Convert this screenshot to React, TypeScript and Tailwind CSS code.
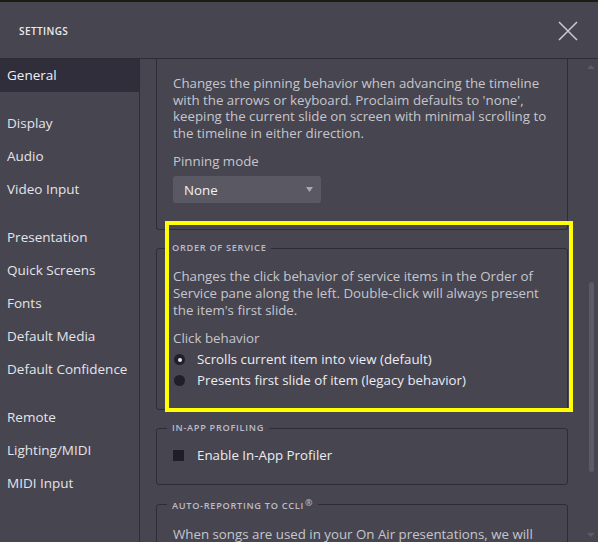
import React from 'react';

const navGroups: string[][] = [
  ['General'],
  ['Display', 'Audio', 'Video Input'],
  ['Presentation', 'Quick Screens', 'Fonts', 'Default Media', 'Default Confidence'],
  ['Remote', 'Lighting/MIDI', 'MIDI Input'],
];

const Legend: React.FC<{ children: React.ReactNode }> = ({ children }) => (
  <legend className="-ml-[6px] px-[5px] text-[9.2px] leading-[12px] font-semibold uppercase tracking-[0.7px] text-[#bdbcc5]">
    {children}
  </legend>
);

export default function App() {
  return (
    <div className="relative w-[598px] h-[542px] overflow-hidden bg-[#464550] font-['Open_Sans',sans-serif] text-[#e6e6ea] flex flex-col">
      <div className="h-[2px] bg-[#1c1c17] shrink-0" />

      {/* header */}
      <div className="h-[56px] shrink-0 flex items-center justify-between pl-[19px] pr-[20px] border-b border-[#2d2c38] box-content">
        <h1 className="mt-[2px] text-[10px] font-semibold tracking-[0.4px] text-[#ececf0]">SETTINGS</h1>
        <svg width="20" height="20" viewBox="0 0 20 20" className="mt-[2px] text-[#c9c8d0]">
          <path d="M1 1 L19 19 M19 1 L1 19" stroke="currentColor" strokeWidth="1.6" fill="none" />
        </svg>
      </div>

      <div className="flex flex-1 min-h-0">
        {/* sidebar */}
        <nav className="w-[139px] shrink-0 border-r border-[#2d2c38] box-content flex flex-col gap-[15px]">
          {navGroups.map((group, gi) => (
            <div key={gi} className="flex flex-col">
              {group.map(label => (
                <div
                  key={label}
                  className={`h-[33px] flex items-center pl-[7px] text-[13.5px] whitespace-nowrap ${label === 'General' ? 'bg-[#2f2e3a] text-[#f0f0f4]' : 'text-[#e4e4e9]'}`}
                >
                  {label}
                </div>
              ))}
            </div>
          ))}
        </nav>

        {/* content */}
        <div className="flex-1 min-w-0 overflow-hidden pl-[16px] flex flex-col gap-[12px] text-[13.3px] leading-[16.6px] text-[#c6c5cd]">
          <fieldset className="border border-t-0 border-[#2d2c38] rounded-b-[3px] pt-[16px] px-[16px] pb-[26px]">
            <p>
              Changes the pinning behavior when advancing the timeline<br />
              with the arrows or keyboard. Proclaim defaults to 'none',<br />
              keeping the current slide on screen with minimal scrolling to<br />
              the timeline in either direction.
            </p>
            <div className="mt-[12px] leading-[17px]">Pinning mode</div>
            <div className="mt-[6px] w-[148px] h-[27px] rounded-[3px] bg-[#5a5963] flex items-center justify-between pl-[11px] pr-[8px]">
              <span className="text-[#f2f2f5]">None</span>
              <svg width="7" height="5" viewBox="0 0 7 5"><path d="M0 0 H7 L3.5 5 Z" fill="#a9a8b1" /></svg>
            </div>
          </fieldset>

          <fieldset className="border border-[#2d2c38] rounded-[3px] pt-[14px] px-[16px] pb-[18px]">
            <Legend>Order of Service</Legend>
            <p>
              Changes the click behavior of service items in the Order of<br />
              Service pane along the left. Double-click will always present<br />
              the item's first slide.
            </p>
            <div className="mt-[12px] leading-[17px]">Click behavior</div>
            <div className="mt-[2px] flex flex-col text-[#ececf1]">
              <label className="h-[21px] flex items-center">
                <span className="w-[11px] h-[11px] rounded-full bg-[#1f1e29] flex items-center justify-center ml-[1px] mr-[12px]">
                  <span className="w-[4px] h-[4px] rounded-full bg-[#e6e6ea]" />
                </span>
                Scrolls current item into view (default)
              </label>
              <label className="h-[21px] flex items-center">
                <span className="w-[11px] h-[11px] rounded-full bg-[#1f1e29] ml-[1px] mr-[12px]" />
                Presents first slide of item (legacy behavior)
              </label>
            </div>
          </fieldset>

          <fieldset className="border border-[#2d2c38] rounded-[3px] pt-[12px] px-[16px] pb-[20px]">
            <Legend>In-App Profiling</Legend>
            <label className="h-[18px] flex items-center text-[#ececf1]">
              <span className="w-[11px] h-[11px] bg-[#1e1d28] mr-[13px]" />
              Enable In-App Profiler
            </label>
          </fieldset>

          <fieldset className="border border-[#2d2c38] rounded-[3px] pt-[14px] px-[16px] pb-[20px]">
            <Legend>
              Auto-Reporting to CCLI<span className="ml-[1px] text-[9px] align-[3px]">®</span>
            </Legend>
            <p>When songs are used in your On Air presentations, we will</p>
          </fieldset>
        </div>

        {/* scrollbar */}
        <div className="w-[30px] shrink-0 pl-[18px] pr-[2px] pt-[6px] pb-[5px] flex flex-col items-center">
          <svg width="8" height="4" viewBox="0 0 8 4"><path d="M0 4 H8 L4 0 Z" fill="#5c5b67" /></svg>
          <div className="mt-[213px] w-[5px] h-[190px] rounded-full bg-[#5b5a66]" />
          <div className="flex-1" />
          <svg width="8" height="4" viewBox="0 0 8 4"><path d="M0 0 H8 L4 4 Z" fill="#5c5b67" /></svg>
        </div>
      </div>

      {/* highlight annotation */}
      <div className="absolute left-[165px] top-[221px] w-[408px] h-[191px] border-4 border-[#ffff00] pointer-events-none" />
    </div>
  );
}
